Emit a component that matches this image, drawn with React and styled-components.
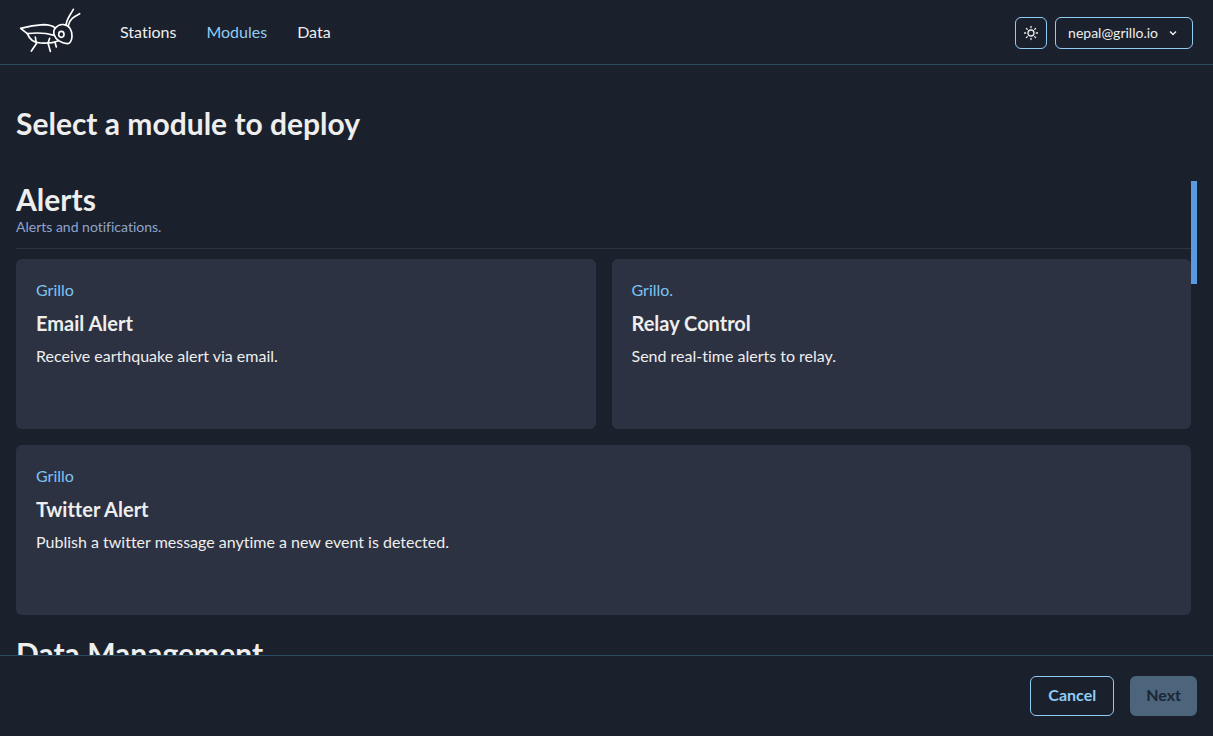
import React, { useState } from "react";
import styled, { createGlobalStyle } from "styled-components";

const GlobalStyle = createGlobalStyle`
  * { box-sizing: border-box; }
  body {
    margin: 0;
    background: #1a202c;
    color: #eeeeee;
    font-family: Lato, "Liberation Sans", sans-serif;
    font-size: 16px;
    font-variant-ligatures: none;
    line-height: 24px;
  }
  h1, h2, h3, p { margin: 0; }
  button { font: inherit; font-variant-ligatures: none; cursor: pointer; }
`;

const Page = styled.div`
  display: flex;
  flex-direction: column;
  height: 100vh;
`;

const Header = styled.header`
  display: flex;
  align-items: center;
  justify-content: space-between;
  flex: none;
  height: 65px;
  padding: 0 20px 0 18px;
  border-bottom: 1px solid #2c4a60;
`;

const Brand = styled.div`
  display: flex;
  align-items: center;
  gap: 38px;
`;

const HomeLink = styled.a`
  display: flex;
  color: #ffffff;
`;

const Nav = styled.nav`
  display: flex;
  gap: 30px;
`;

const NavLink = styled.a`
  color: ${({ $active }) => ($active ? "#90cdf4" : "#eeeeee")};
  text-decoration: none;
`;

const Tools = styled.div`
  display: flex;
  gap: 8px;
  padding-top: 2px;
`;

const ToolButton = styled.button`
  display: flex;
  align-items: center;
  justify-content: center;
  gap: 8px;
  height: 32px;
  min-width: 32px;
  padding: ${({ $wide }) => ($wide ? "0 12px" : "0")};
  border: 1px solid #90cdf4;
  border-radius: 6px;
  background: transparent;
  color: #eeeeee;
  font-size: 14px;
`;

const Main = styled.main`
  display: flex;
  flex: 1;
  flex-direction: column;
  min-height: 0;
  padding: 38px 16px 0;
`;

const Title = styled.h1`
  margin-bottom: 38px;
  font-size: 30px;
  font-weight: 700;
  line-height: 40px;
`;

const ScrollArea = styled.div`
  display: flex;
  flex: 1;
  min-height: 0;
`;

const ModuleList = styled.div`
  display: flex;
  flex: 1;
  flex-direction: column;
  gap: 20px;
  overflow-y: auto;
  scrollbar-width: none;
`;

const Track = styled.div`
  width: 6px;
`;

const Thumb = styled.div`
  height: 103px;
  background: #5a9ae0;
`;

const SectionHead = styled.header`
  padding-bottom: 12px;
  border-bottom: 1px solid #2d3340;
`;

const SectionTitle = styled.h2`
  font-size: 30px;
  font-weight: 700;
  line-height: 36px;
`;

const SectionNote = styled.p`
  color: #90a4cc;
  font-size: 14px;
  line-height: 19px;
`;

const Cards = styled.div`
  display: flex;
  flex-wrap: wrap;
  gap: 16px;
  margin-top: 10px;
`;

const Card = styled.article`
  display: flex;
  flex: 1 1 400px;
  flex-direction: column;
  gap: 9px;
  min-height: 170px;
  padding: 19px 20px;
  border-radius: 6px;
  background: #2d3242;
`;

const Vendor = styled.p`
  color: #7cc4f5;
`;

const CardTitle = styled.h3`
  font-size: 20px;
  font-weight: 700;
  line-height: 24px;
`;

const Footer = styled.footer`
  display: flex;
  flex: none;
  justify-content: flex-end;
  gap: 16px;
  padding: 20px 16px;
  border-top: 1px solid #2c4a60;
`;

const ActionButton = styled.button`
  height: 40px;
  padding: 0 ${({ $solid }) => ($solid ? "16px" : "17px")} 2px;
  border: ${({ $solid }) => ($solid ? "none" : "1px solid #90cdf4")};
  border-radius: 6px;
  background: ${({ $solid }) => ($solid ? "#4c657c" : "transparent")};
  color: ${({ $solid }) => ($solid ? "#1a2636" : "#90cdf4")};
  font-weight: 700;
`;

const sections = [
  {
    title: "Alerts",
    note: "Alerts and notifications.",
    modules: [
      { vendor: "Grillo", name: "Email Alert", text: "Receive earthquake alert via email." },
      { vendor: "Grillo.", name: "Relay Control", text: "Send real-time alerts to relay." },
      { vendor: "Grillo", name: "Twitter Alert", text: "Publish a twitter message anytime a new event is detected." },
    ],
  },
  { title: "Data Management", modules: [] },
];

const CricketLogo = () => (
  <svg width="64" height="48" viewBox="54 24 192 144" fill="none" stroke="currentColor" strokeWidth="5" strokeLinecap="round" strokeLinejoin="round" aria-hidden="true">
    <path d="M166 84C158 77 146 74 130 74C108 75 84 79 62 85L82 101C105 98 135 98 163 106" />
    <path d="M82 101C88 117 101 129 122 129C143 130 160 129 175 122" />
    <path d="M166 84C173 76 182 72 192 74C208 75 216 91 216 108C216 121 210 132 201 131C184 129 167 119 163 106C160 98 161 90 166 84Z" />
    <ellipse cx="184" cy="103" rx="8" ry="9" />
    <path d="M198 76C199 59 209 48 220 28M205 77C208 58 222 50 239 41" />
    <path d="M106 111L109 131L94 153M149 115L144 129L151 154M165 127L169 141" />
  </svg>
);

const SunIcon = () => (
  <svg width="16" height="16" viewBox="0 0 16 16" fill="none" stroke="currentColor" strokeWidth="1.3" strokeLinecap="round" aria-hidden="true">
    <circle cx="8" cy="8" r="3" />
    <path d="M8 1.5V2.7M8 13.3V14.5M1.5 8H2.7M13.3 8H14.5M3.4 3.4L4.2 4.2M11.8 11.8L12.6 12.6M3.4 12.6L4.2 11.8M11.8 4.2L12.6 3.4" />
  </svg>
);

const ChevronIcon = () => (
  <svg width="14" height="14" viewBox="0 0 14 14" fill="none" stroke="currentColor" strokeWidth="1.5" aria-hidden="true">
    <path d="M4 5.5L7 8.5L10 5.5" />
  </svg>
);

export default function App() {
  const [offset, setOffset] = useState(0);
  const onScroll = (event) => {
    const { scrollTop, scrollHeight, clientHeight } = event.currentTarget;
    const range = scrollHeight - clientHeight;
    setOffset(range > 0 ? (scrollTop / range) * (clientHeight - 103) : 0);
  };

  return (
    <>
      <GlobalStyle />
      <Page>
        <Header>
          <Brand>
            <HomeLink href="#" aria-label="Home"><CricketLogo /></HomeLink>
            <Nav>
              <NavLink href="#stations">Stations</NavLink>
              <NavLink href="#modules" $active aria-current="page">Modules</NavLink>
              <NavLink href="#data">Data</NavLink>
            </Nav>
          </Brand>
          <Tools>
            <ToolButton type="button" aria-label="Toggle theme"><SunIcon /></ToolButton>
            <ToolButton type="button" $wide aria-haspopup="menu">nepal@grillo.io<ChevronIcon /></ToolButton>
          </Tools>
        </Header>
        <Main>
          <Title>Select a module to deploy</Title>
          <ScrollArea>
            <ModuleList onScroll={onScroll}>
              {sections.map((section) => (
                <section key={section.title}>
                  <SectionHead>
                    <SectionTitle>{section.title}</SectionTitle>
                    {section.note && <SectionNote>{section.note}</SectionNote>}
                  </SectionHead>
                  <Cards>
                    {section.modules.map((module) => (
                      <Card key={module.name}>
                        <Vendor>{module.vendor}</Vendor>
                        <CardTitle>{module.name}</CardTitle>
                        <p>{module.text}</p>
                      </Card>
                    ))}
                  </Cards>
                </section>
              ))}
            </ModuleList>
            <Track><Thumb style={{ marginTop: offset }} /></Track>
          </ScrollArea>
        </Main>
        <Footer>
          <ActionButton type="button">Cancel</ActionButton>
          <ActionButton type="button" $solid disabled>Next</ActionButton>
        </Footer>
      </Page>
    </>
  );
}
